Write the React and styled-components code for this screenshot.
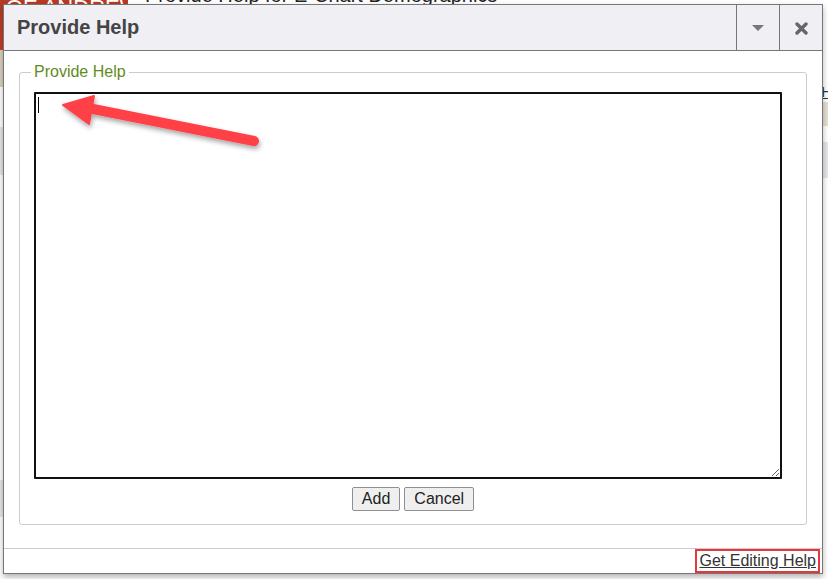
import styled, { createGlobalStyle } from "styled-components";

const Global = createGlobalStyle`
  html, body {
    margin: 0;
    padding: 0;
    background: #ffffff;
    font-family: "Liberation Sans", Arial, sans-serif;
  }
`;

export default function App() {
  return (
    <>
      <Global />
      <Page>
        <TopBar>
          <Logo>OE ANDREWS</Logo>
          <PageTitle>Provide Help for E-Chart Demographics</PageTitle>
        </TopBar>
        <Content>
          <Sidebar>
            <SideBand tone="beige" h={37} />
            <SideBand tone="white" h={40} />
            <SideBand tone="grey" h={48} />
            <SideBand tone="white" h={305} />
            <SideBand tone="grey" h={37} />
          </Sidebar>
          <Main>
            <MainBand tone="white" h={52}>
              <MainLink>Help</MainLink>
            </MainBand>
            <MainBand tone="beige" h={24} />
            <MainBand tone="white" h={16} />
            <MainBand tone="grey" h={36} />
          </Main>
        </Content>

        <Dialog>
          <TitleBar>
            <Title>Provide Help</Title>
            <TitleButton aria-label="collapse">
              <svg width="12" height="7" viewBox="0 0 12 7">
                <path d="M0 0 H12 L6 6 Z" fill="#777" />
              </svg>
            </TitleButton>
            <TitleButton aria-label="close">
              <svg width="13" height="13" viewBox="0 0 13 13">
                <path
                  d="M2 2 L11 11 M11 2 L2 11"
                  stroke="#666"
                  strokeWidth="3.4"
                  strokeLinecap="round"
                />
              </svg>
            </TitleButton>
          </TitleBar>

          <Body>
            <Group>
              <GroupLegend>Provide Help</GroupLegend>
              <EditorWrap>
                <Editor defaultValue="" />
                <Caret />
                <Arrow width="240" height="60" viewBox="0 0 240 60">
                  <defs>
                    <filter id="sh" x="-20%" y="-50%" width="140%" height="200%">
                      <feDropShadow dx="1" dy="3" stdDeviation="2.5" floodColor="#000" floodOpacity="0.35" />
                    </filter>
                  </defs>
                  <g filter="url(#sh)" fill="#ff4047" stroke="#ff4047">
                    <line x1="53" y1="20" x2="219" y2="53" strokeWidth="10" strokeLinecap="round" />
                    <path d="M28 17 L59 8 L54 36 Z" strokeWidth="2" strokeLinejoin="round" />
                  </g>
                </Arrow>
              </EditorWrap>
              <Actions>
                <Button>Add</Button>
                <Button>Cancel</Button>
              </Actions>
            </Group>
          </Body>

          <Footer>
            <HelpBox>
              <HelpLink href="#">Get Editing Help</HelpLink>
            </HelpBox>
          </Footer>
        </Dialog>
      </Page>
    </>
  );
}

const Page = styled.div`
  position: relative;
  width: 828px;
  height: 579px;
  overflow: hidden;
  background: #fff;
`;

const TopBar = styled.div`
  display: flex;
  align-items: flex-start;
  height: 50px;
`;

const Logo = styled.div`
  width: 128px;
  height: 50px;
  background: linear-gradient(#b83a22, #c63d26);
  color: #fff;
  font-size: 22px;
  line-height: 16px;
  padding-left: 6px;
  box-sizing: border-box;
  overflow: hidden;
  white-space: nowrap;
`;

const PageTitle = styled.div`
  margin: -16px 0 0 17px;
  font-size: 20px;
  color: #222;
  white-space: nowrap;
`;

const Content = styled.div`
  display: flex;
`;

const bandColor = {
  beige: "linear-gradient(90deg, #d9d1bf, #e6e0d2)",
  white: "#ffffff",
  grey: "#e6e6eb",
};

const Sidebar = styled.div`
  width: 128px;
  display: flex;
  flex-direction: column;
`;

const SideBand = styled.div`
  height: ${(p) => p.h}px;
  background: ${(p) => bandColor[p.tone]};
`;

const Main = styled.div`
  flex: 1;
  display: flex;
  flex-direction: column;
`;

const MainBand = styled.div`
  height: ${(p) => p.h}px;
  background: ${(p) => bandColor[p.tone]};
  display: flex;
  align-items: flex-end;
  justify-content: flex-end;
`;

const MainLink = styled.span`
  font-size: 15px;
  color: #333;
  text-decoration: underline;
  margin-right: -24px;
  margin-bottom: 2px;
`;

const Dialog = styled.div`
  position: absolute;
  left: 3px;
  top: 4px;
  width: 820px;
  height: 570px;
  box-sizing: border-box;
  background: #fff;
  border: 1px solid #777;
  box-shadow: 0 3px 6px rgba(0, 0, 0, 0.3);
  display: flex;
  flex-direction: column;
`;

const TitleBar = styled.div`
  display: flex;
  align-items: stretch;
  height: 45px;
  background: #efeff4;
  border-bottom: 1px solid #777;
  flex-shrink: 0;
`;

const Title = styled.div`
  flex: 1;
  padding-left: 13px;
  display: flex;
  align-items: center;
  font-size: 20px;
  font-weight: bold;
  color: #444;
`;

const TitleButton = styled.div`
  width: 42px;
  border-left: 1px solid #777;
  display: flex;
  align-items: center;
  justify-content: center;
  padding-top: 1px;
`;

const Body = styled.div`
  flex: 1;
  padding: 12px 15px 0;
`;

const Group = styled.fieldset`
  margin: 0;
  border: 1px solid #ccc;
  border-radius: 3px;
  padding: 11px 14px 13px;
  width: 788px;
  box-sizing: border-box;
`;

const GroupLegend = styled.legend`
  padding: 0 3px;
  margin-left: -3px;
  font-size: 16px;
  color: #5f8c1b;
`;

const EditorWrap = styled.div`
  position: relative;
  width: 748px;
`;

const Editor = styled.textarea`
  display: block;
  width: 748px;
  height: 387px;
  box-sizing: border-box;
  border: 2px solid #111;
  border-radius: 1px;
  resize: both;
  font-family: "Liberation Sans", Arial, sans-serif;
  font-size: 14px;
  outline: none;
  margin: 0;
`;

const Caret = styled.span`
  position: absolute;
  left: 4px;
  top: 5px;
  width: 1px;
  height: 16px;
  background: #000;
`;

const Arrow = styled.svg`
  position: absolute;
  left: 1px;
  top: -4px;
  overflow: visible;
`;

const Actions = styled.div`
  display: flex;
  justify-content: center;
  gap: 4px;
  margin-top: 8px;
`;

const Button = styled.button`
  height: 24px;
  padding: 0 9px;
  font-family: "Liberation Sans", Arial, sans-serif;
  font-size: 16px;
  color: #222;
  background: #efefef;
  border: 1px solid #8f8f8f;
  border-radius: 2px;
`;

const Footer = styled.div`
  height: 24px;
  border-top: 1px solid #ccc;
  display: flex;
  justify-content: flex-end;
  padding-right: 2px;
  flex-shrink: 0;
`;

const HelpBox = styled.div`
  border: 2px solid #e5383b;
  padding: 0 2px;
  display: flex;
  align-items: center;
`;

const HelpLink = styled.a`
  font-size: 16px;
  color: #333;
  text-decoration: underline;
`;
